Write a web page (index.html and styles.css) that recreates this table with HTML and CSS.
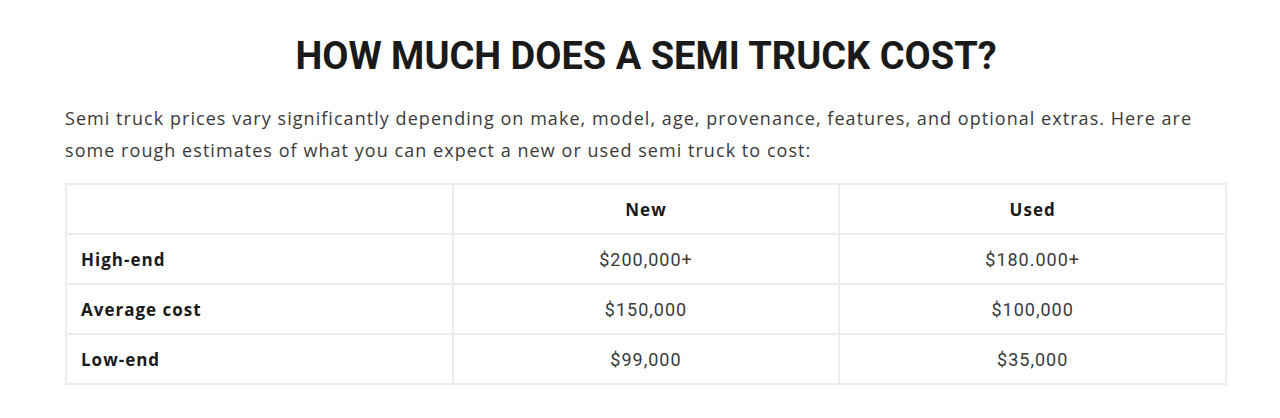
FILE: index.html
```html
<!DOCTYPE html>
<html>
<head>
<meta charset="utf-8">
<link rel="stylesheet" href="styles.css">
</head>
<body>
<main class="page">
  <h2 class="title">HOW MUCH DOES A SEMI TRUCK COST?</h2>
  <p class="intro">Semi truck prices vary significantly depending on make, model, age, provenance, features, and optional extras. Here are some rough estimates of what you can expect a new or used semi truck to cost:</p>
  <table class="costs">
    <thead>
      <tr><th></th><th>New</th><th>Used</th></tr>
    </thead>
    <tbody>
      <tr><td class="label">High-end</td><td>$200,000+</td><td>$180.000+</td></tr>
      <tr><td class="label">Average cost</td><td>$150,000</td><td>$100,000</td></tr>
      <tr><td class="label">Low-end</td><td>$99,000</td><td>$35,000</td></tr>
    </tbody>
  </table>
</main>
</body>
</html>
```

FILE: styles.css
```css
html, body { margin: 0; padding: 0; background: #fff; }
body { font-family: "Open Sans", sans-serif; color: #333; }
.page { width: 1162px; margin: 0 0 0 65px; padding-top: 34px; }
.title {
  margin: 0;
  text-align: center;
  font-family: Roboto, "Liberation Sans", sans-serif;
  font-weight: 700;
  font-size: 38px;
  line-height: 44px;
  color: #1a1a1a;
}
.intro {
  margin: 24px 0 17px;
  font-size: 18px;
  line-height: 32px;
  letter-spacing: 1.05px;
  color: #3a3a3a;
}
.costs {
  width: 100%;
  border-collapse: collapse;
  table-layout: fixed;
  border: 2px solid #ececec;
}
.costs th, .costs td {
  border: 2px solid #ececec;
  height: 48px;
  padding: 0 14px;
  text-align: center;
  font-family: Roboto, sans-serif;
  font-size: 18px;
  letter-spacing: 1px;
  color: #3a3a3a;
}
.costs th {
  font-family: "Open Sans", sans-serif;
  font-size: 17px;
  font-weight: 700;
  color: #1a1a1a;
}
.costs td.label {
  text-align: left;
  font-family: "Open Sans", sans-serif;
  font-size: 17px;
  font-weight: 700;
  color: #1a1a1a;
}
```
